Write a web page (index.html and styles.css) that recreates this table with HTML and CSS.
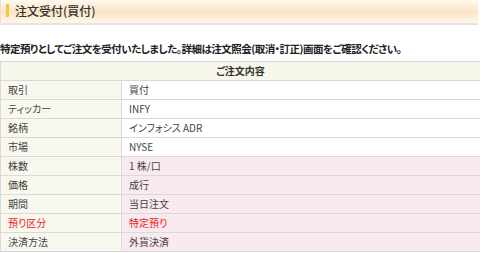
FILE: index.html
```html
<!DOCTYPE html>
<html lang="ja">
<head>
<meta charset="utf-8">
<title>注文受付(買付)</title>
<link rel="stylesheet" href="styles.css">
</head>
<body>
<div class="page">
  <h1 class="page-title"><span class="title-mark"></span>注文受付(買付)</h1>
  <p class="notice">特定預りとしてご注文を受付いたしました。詳細は注文照会(取消・訂正)画面をご確認ください。</p>
  <table class="order">
    <thead>
      <tr><th colspan="2">ご注文内容</th></tr>
    </thead>
    <tbody>
      <tr><td class="label">取引</td><td class="value">買付</td></tr>
      <tr><td class="label">ティッカー</td><td class="value">INFY</td></tr>
      <tr><td class="label">銘柄</td><td class="value">インフォシス ADR</td></tr>
      <tr><td class="label">市場</td><td class="value">NYSE</td></tr>
      <tr class="input"><td class="label">株数</td><td class="value">1 株/口</td></tr>
      <tr class="input"><td class="label">価格</td><td class="value">成行</td></tr>
      <tr class="input"><td class="label">期間</td><td class="value">当日注文</td></tr>
      <tr class="input alert"><td class="label">預り区分</td><td class="value">特定預り</td></tr>
      <tr class="input"><td class="label">決済方法</td><td class="value">外貨決済</td></tr>
    </tbody>
  </table>
</div>
</body>
</html>
```
FILE: styles.css
```css
html, body {
  margin: 0;
  padding: 0;
  background: #fff;
  overflow: hidden;
}

.page {
  width: 480px;
  font-family: "Noto Sans CJK JP", "Noto Sans", sans-serif;
  font-feature-settings: "palt";
  color: #333;
}

.page-title {
  display: flex;
  align-items: center;
  gap: 6px;
  box-sizing: border-box;
  width: 478px;
  height: 25px;
  margin: 0;
  padding: 0 0 2px 5px;
  font-size: 12px;
  font-weight: 500;
  color: #333;
  background: linear-gradient(to bottom, #fff9f0 0%, #fbe4c6 50%, #fff6ea 100%);
  border-left: 1px solid #e6e2dc;
  border-bottom: 2px solid #e3e3e3;
}

.title-mark {
  width: 3px;
  height: 13px;
  background: #f4c63c;
}

.notice {
  margin: 16px 0 4px;
  font-size: 10.5px;
  font-weight: bold;
  letter-spacing: -0.5px;
  line-height: 16px;
  color: #222;
}

.order {
  width: 481px;
  border-collapse: collapse;
  font-size: 10px;
  color: #444;
}

.order th,
.order td {
  height: 18px;
  padding: 0 7px;
  border: 1px solid #dcd8d8;
  line-height: 18px;
}

.order th {
  background: #f7f6eb;
  font-weight: bold;
  color: #333;
  text-align: center;
}

.order .label {
  width: 106px;
  background: #f8f8ee;
}

.order .value {
  background: #fff;
}

.order .input .value {
  background: #f9eaef;
}

.order .alert td {
  color: #e8231d;
}
```
